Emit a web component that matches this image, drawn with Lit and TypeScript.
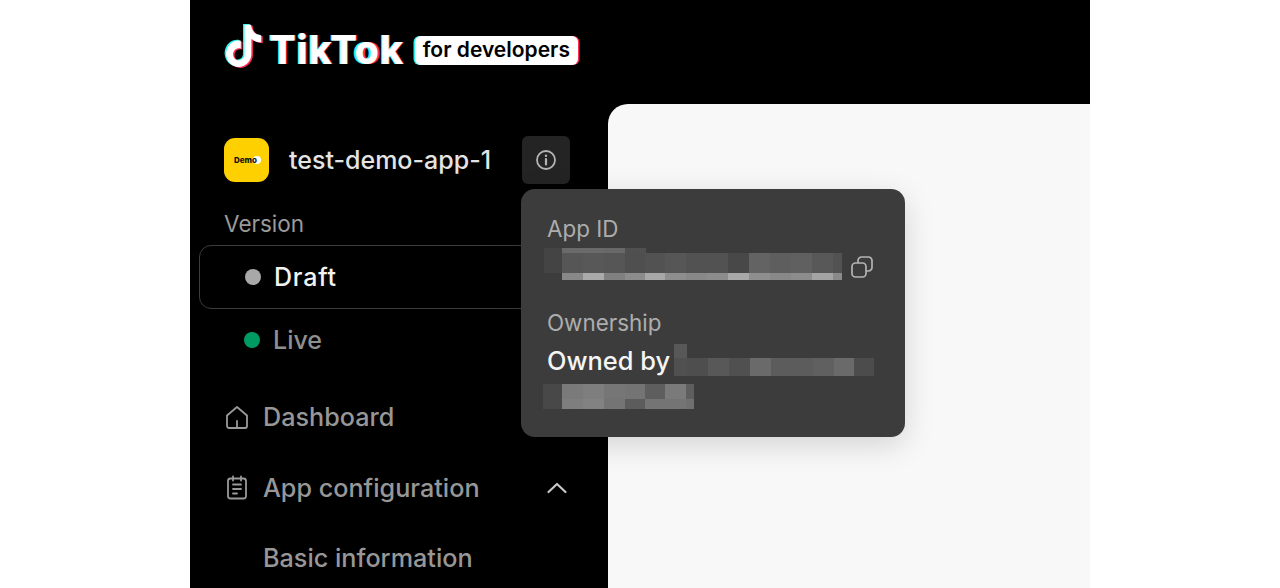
import { LitElement, html, css, svg } from 'lit';
import { customElement } from 'lit/decorators.js';

const NOTE =
    'M12.525.02c1.31-.02 2.61-.01 3.91-.02.08 1.53.63 3.09 1.75 4.17 1.12 1.11 2.7 1.62 4.24 1.79v4.03c-1.44-.05-2.89-.35-4.2-.97-.57-.26-1.1-.59-1.62-.93-.01 2.92.01 5.84-.02 8.75-.08 1.4-.54 2.79-1.35 3.94-1.31 1.92-3.58 3.17-5.91 3.21-1.43.08-2.86-.31-4.08-1.03-2.02-1.19-3.44-3.37-3.65-5.71-.02-.5-.03-1-.01-1.49.18-1.9 1.12-3.72 2.58-4.96 1.66-1.44 3.98-2.13 6.15-1.72.02 1.48-.04 2.96-.04 4.44-.99-.32-2.15-.23-3.02.37-.63.41-1.11 1.04-1.36 1.75-.21.51-.15 1.07-.14 1.61.24 1.64 1.82 3.02 3.5 2.87 1.12-.01 2.19-.66 2.77-1.61.19-.33.4-.67.41-1.06.1-1.79.06-3.57.07-5.36.01-4.03-.01-8.05.02-12.07z';

// pixelated redaction blocks: [row height, [cell width, gray]...]
type BlurRow = [number, [number, string][]];

const APP_ID_BLUR: BlurRow[] = [
    [5, [[18, '#444'], [21, '#6a6a6a'], [21, '#6a6a6a'], [21, '#686868'], [21, '#505050']]],
    [20, [[18, '#444'], [21, '#565656'], [21, '#585858'], [21, '#565656'], [20, '#4f4f4f'], [20, '#525252'], [21, '#565656'], [21, '#525252'], [21, '#525252'], [21, '#484848'], [21, '#636363'], [21, '#5e5e5e'], [21, '#606060'], [21, '#585858'], [9, '#525252']]],
    [7, [[18, 'transparent'], [21, '#888'], [21, '#aaa'], [21, '#808080'], [20, '#8c8c8c'], [20, '#a8a8a8'], [21, '#8e8e8e'], [21, '#888'], [21, '#8c8c8c'], [21, '#a8a8a8'], [21, '#8e8e8e'], [21, '#888'], [21, '#8c8c8c'], [21, '#a4a4a4'], [9, '#8a8a8a']]],
];

const OWNER_BLUR: BlurRow[] = [
    [14, [[13, '#585858']]],
    [18, [[13, '#505050'], [21, '#4e4e4e'], [21, '#585858'], [21, '#505050'], [21, '#6a6a6a'], [21, '#5c5c5c'], [21, '#5c5c5c'], [21, '#606060'], [20, '#6a6a6a'], [20, '#4c4c4c']]],
];

const OWNER_BLUR_2: BlurRow[] = [
    [15, [[19, '#484848'], [21, '#7a7a7a'], [21, '#7e7e7e'], [21, '#767676'], [20, '#747474'], [20, '#5e5e5e'], [21, '#7a7a7a'], [8, '#5e5e5e']]],
    [10, [[19, '#484848'], [21, '#7e7e7e'], [21, '#828282'], [21, '#747474'], [20, '#5c5c5c'], [20, '#747474'], [21, '#747474'], [8, '#707070']]],
];

@customElement('app-root')
export class AppRoot extends LitElement {
    static styles = css`
        :host {
            display: flex;
            justify-content: center;
            height: 588px;
            overflow: hidden;
            background: #fff;
            font-family: Inter, 'Liberation Sans', sans-serif;
            color: #999;
        }

        .shell {
            width: 900px;
            background: #000;
            display: flex;
            flex-direction: column;
        }

        .header {
            height: 104px;
            flex: none;
            display: flex;
            align-items: flex-start;
            padding: 24px 0 0 33px;
            box-sizing: border-box;
        }

        .note {
            width: 40px;
            height: 44px;
            flex: none;
        }

        .wordmark {
            margin-left: 6px;
            font-size: 39.5px;
            line-height: 52px;
            font-weight: 800;
            color: #fff;
            letter-spacing: 0.7px;
            text-shadow: -0.7px 0 0 #25f4ee, 0.7px 0 0 #fe2c55;
        }

        .wordmark b {
            font-weight: 800;
            text-shadow: -2px 0 0 #25f4ee, 2px 0 0 #fe2c55;
        }

        .badge {
            margin: 12px 0 0 11px;
            height: 29px;
            width: 163px;
            border-radius: 6px;
            background: #fff;
            color: #000;
            font-size: 21px;
            line-height: 28px;
            font-weight: 600;
            text-align: center;
            box-shadow: -1.5px 0 0 #25f4ee, 1.5px 0 0 #fe2c55;
        }

        .body {
            flex: 1;
            display: flex;
            min-height: 0;
        }

        .sidebar {
            position: relative;
            width: 418px;
            flex: none;
            box-sizing: border-box;
            padding: 32px 0 0 9px;
        }

        .content {
            flex: 1;
            background: #f8f8f8;
            border-top-left-radius: 20px;
        }

        .app-row {
            display: flex;
            align-items: center;
            height: 48px;
            padding-left: 25px;
        }

        .app-icon {
            position: relative;
            width: 45px;
            height: 44px;
            box-sizing: border-box;
            padding-left: 10px;
            border-radius: 11px;
            background: #ffd000;
            flex: none;
            overflow: hidden;
            display: flex;
            align-items: center;
        }

        .app-icon span {
            position: relative;
            color: #111;
            font-size: 8px;
            line-height: 1;
            font-weight: 800;
        }

        .app-icon i {
            position: absolute;
            left: 29px;
            top: 18px;
            width: 8px;
            height: 8px;
            border-radius: 50%;
            background: #fff;
        }

        .app-name {
            margin-left: 20px;
            width: 233px;
            flex: none;
            font-size: 25px;
            font-weight: 500;
            color: #e4e4e4;
        }

        .info-btn {
            width: 48px;
            height: 48px;
            border-radius: 6px;
            background: #242424;
            display: flex;
            align-items: center;
            justify-content: center;
            flex: none;
        }

        .version {
            margin: 25px 0 0 25px;
            font-size: 22.5px;
            line-height: 30px;
            font-weight: 400;
            color: #9a9a9a;
        }

        .draft,
        .live {
            display: flex;
            align-items: center;
            font-size: 25px;
            font-weight: 500;
            height: 64px;
            box-sizing: border-box;
        }

        .draft {
            margin-top: 6px;
            width: 380px;
            border: 1px solid #3c3c3c;
            border-radius: 12px;
            padding-left: 45px;
            letter-spacing: 0.8px;
            color: #f2f2f2;
        }

        .live {
            padding-left: 45px;
            color: #8f8f8f;
            margin-top: -1px;
        }

        .dot {
            width: 16px;
            height: 16px;
            border-radius: 50%;
            margin-right: 13px;
            flex: none;
        }

        .draft .dot {
            background: #a8a8a8;
        }

        .live .dot {
            background: #009a63;
        }

        .nav {
            display: flex;
            align-items: center;
            gap: 14px;
            height: 32px;
            padding-left: 26px;
            font-size: 25.2px;
            font-weight: 500;
            width: 343px;
            color: #979797;
        }

        .nav svg {
            flex: none;
        }

        .nav .chev {
            margin-left: auto;
        }

        .nav.first {
            margin-top: 29px;
        }

        .nav.second {
            margin-top: 39px;
        }

        .sub {
            margin: 38px 0 0 64px;
            height: 32px;
            line-height: 32px;
            font-size: 25.2px;
            font-weight: 500;
            color: #979797;
        }

        .popover {
            position: absolute;
            left: 331px;
            top: 85px;
            width: 384px;
            height: 248px;
            box-sizing: border-box;
            padding: 26px 26px 0;
            background: #3c3c3c;
            border-radius: 14px;
            box-shadow: 0 8px 30px rgba(0, 0, 0, 0.15);
        }

        .label {
            font-size: 22.4px;
            line-height: 28px;
            color: #adadad;
        }

        .id-row {
            display: flex;
            align-items: flex-start;
            margin: 5px 0 0 -3px;
        }

        .id-row svg {
            margin: 8px 0 0 9px;
        }

        .ownership {
            margin-top: 29px;
        }

        .owned {
            display: flex;
            align-items: flex-start;
            margin-top: 7px;
            font-size: 25.4px;
            font-weight: 500;
            line-height: 34px;
            color: #f5f5f5;
        }

        .owned span {
            margin-right: 4px;
        }

        .blur {
            display: flex;
            flex-direction: column;
            flex: none;
        }

        .blur div {
            display: flex;
        }

        .blur-2 {
            margin: 6px 0 0 -4px;
        }
    `;

    renderBlur(rows: BlurRow[], extra = '') {
        return html`
            <div class="blur ${extra}">
                ${rows.map(
                    ([height, cells]) => html`
                        <div style="height:${height}px">
                            ${cells.map(
                                ([width, gray]) => html`<i style="display:block;width:${width}px;background:${gray}"></i>`
                            )}
                        </div>
                    `
                )}
            </div>
        `;
    }

    get noteIcon() {
        return svg`
            <svg class="note" viewBox="-0.3 -0.45 23.8 25" preserveAspectRatio="none">
                <path d=${NOTE} fill="#25f4ee" transform="translate(-0.9 -0.4)"></path>
                <path d=${NOTE} fill="#fe2c55" transform="translate(0.9 0.5)"></path>
                <path d=${NOTE} fill="#fff"></path>
            </svg>
        `;
    }

    render() {
        return html`
            <div class="shell">
                <div class="header">
                    ${this.noteIcon}
                    <div class="wordmark">TikT<b>o</b>k</div>
                    <div class="badge">for developers</div>
                </div>
                <div class="body">
                    <div class="sidebar">
                        <div class="app-row">
                            <div class="app-icon"><i></i><span>Demo</span></div>
                            <div class="app-name">test-demo-app-1</div>
                            <div class="info-btn">
                                <svg width="22" height="22" viewBox="0 0 22 22" fill="none" stroke="#b4b4b4" stroke-width="1.8" stroke-linecap="round">
                                    <circle cx="11" cy="11" r="9"></circle>
                                    <path d="M11 10v5.5" stroke-width="2.2"></path>
                                    <path d="M11 6.6v.2" stroke-width="2.4"></path>
                                </svg>
                            </div>
                        </div>
                        <div class="version">Version</div>
                        <div class="draft"><i class="dot"></i>Draft</div>
                        <div class="live"><i class="dot"></i>Live</div>
                        <div class="nav first">
                            <svg width="24" height="26" viewBox="0 0 24 26" fill="none" stroke="#999" stroke-width="1.8" stroke-linejoin="round" stroke-linecap="round">
                                <path d="M2 11.5 12 3l10 8.5V22a2 2 0 0 1-2 2H4a2 2 0 0 1-2-2z"></path>
                                <path d="M12 17v7"></path>
                            </svg>
                            Dashboard
                        </div>
                        <div class="nav second">
                            <svg width="24" height="26" viewBox="0 0 24 26" fill="none" stroke="#999" stroke-width="1.8" stroke-linecap="round" stroke-linejoin="round">
                                <rect x="3" y="3.500" width="18" height="20" rx="2.500"></rect>
                                <path d="M8 1.500v4M16 1.500v4M8 9.500h8M8 14h8M8 18.500h4"></path>
                            </svg>
                            App configuration
                            <svg class="chev" width="22" height="14" viewBox="0 0 22 14" fill="none" stroke="#c8c8c8" stroke-width="2.200" stroke-linecap="round" stroke-linejoin="round">
                                <path d="M2.500 11 11 3l8.500 8"></path>
                            </svg>
                        </div>
                        <div class="sub">Basic information</div>

                        <div class="popover">
                            <div class="label">App ID</div>
                            <div class="id-row">
                                ${this.renderBlur(APP_ID_BLUR)}
                                <svg width="22" height="22" viewBox="0 0 22 22" fill="none" stroke="#b4b4b4" stroke-width="1.7">
                                    <rect x="1" y="7" width="14" height="14" rx="3.500"></rect>
                                    <path d="M7 7V4.500A3.500 3.500 0 0 1 10.500 1h7A3.500 3.500 0 0 1 21 4.500v7a3.500 3.500 0 0 1-3.500 3.500H15"></path>
                                </svg>
                            </div>
                            <div class="label ownership">Ownership</div>
                            <div class="owned">
                                <span>Owned by</span>
                                ${this.renderBlur(OWNER_BLUR)}
                            </div>
                            ${this.renderBlur(OWNER_BLUR_2, 'blur-2')}
                        </div>
                    </div>
                    <div class="content"></div>
                </div>
            </div>
        `;
    }
}
